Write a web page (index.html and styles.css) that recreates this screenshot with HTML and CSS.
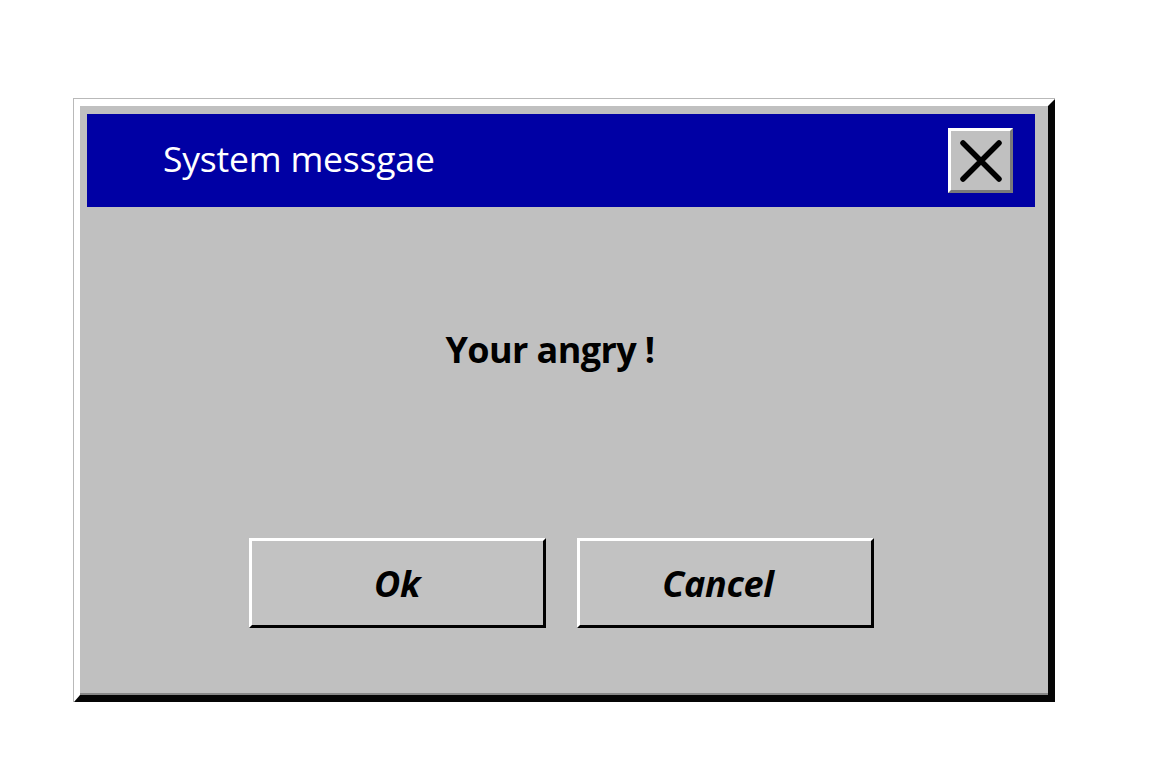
FILE: index.html
```html
<!DOCTYPE html>
<html>
<head>
<meta charset="utf-8">
<link rel="stylesheet" href="styles.css">
</head>
<body>
<div class="dialog">
  <div class="frame">
    <div class="titlebar">
      <span class="title">System messgae</span>
      <button class="close" aria-label="Close">
        <svg width="44" height="44" viewBox="0 0 44 44"><path d="M4 4 L40 40 M40 4 L4 40" stroke="#000" stroke-width="5.5" stroke-linecap="round"/></svg>
      </button>
    </div>
    <div class="content">
      <div class="message">Your angry !</div>
      <div class="buttons">
        <button class="btn">Ok</button>
        <button class="btn btn-cancel">Cancel</button>
      </div>
    </div>
  </div>
</div>
</body>
</html>
```
FILE: styles.css
```css
html, body {
  margin: 0;
  padding: 0;
  background: #ffffff;
}
body {
  padding: 98px 0 0 73px;
  font-family: "Open Sans", "Noto Sans", sans-serif;
}
.dialog {
  width: 982px;
  height: 604px;
  box-sizing: border-box;
  border-top: 1px solid #b9b9b9;
  border-left: 1px solid #b9b9b9;
}
.frame {
  box-sizing: border-box;
  height: 100%;
  background: #c0c0c0;
  border-top: 7px solid #ffffff;
  border-left: 6px solid #ffffff;
  border-right: 7px solid #050505;
  border-bottom: 7px solid #050505;
  box-shadow: inset -2px -7px 0 -5px #888888;
  padding: 8px 13px 7px 7px;
  display: flex;
  flex-direction: column;
}
.titlebar {
  height: 93px;
  flex: none;
  background: #0000a4;
  display: flex;
  align-items: center;
  justify-content: space-between;
  padding: 0 22px 0 76px;
  box-sizing: border-box;
}
.title {
  color: #ffffff;
  font-size: 35.5px;
  font-weight: 400;
  letter-spacing: -0.2px;
  margin-top: -6px;
}
.close {
  width: 65px;
  height: 65px;
  box-sizing: border-box;
  padding: 0;
  margin: 0;
  background: #c0c0c0;
  border-top: 3px solid #ffffff;
  border-left: 3px solid #ffffff;
  border-right: 3px solid #7a7a7a;
  border-bottom: 3px solid #7a7a7a;
  display: flex;
  align-items: center;
  justify-content: center;
}
.close svg {
  display: block;
}
.content {
  flex: 1;
  display: flex;
  flex-direction: column;
  align-items: center;
}
.message {
  margin-top: 118px;
  margin-right: 22px;
  font-size: 36px;
  font-weight: 700;
  color: #000;
  letter-spacing: -0.6px;
}
.buttons {
  margin-top: 164px;
  display: flex;
  gap: 31px;
}
.btn {
  width: 297px;
  height: 90px;
  box-sizing: border-box;
  background: #c2c2c2;
  border-top: 3px solid #ffffff;
  border-left: 3px solid #ffffff;
  border-right: 3px solid #000000;
  border-bottom: 3px solid #000000;
  font-family: "Open Sans", "Noto Sans", sans-serif;
  font-size: 36px;
  font-weight: 700;
  font-style: italic;
  letter-spacing: -0.3px;
  color: #000;
  padding: 0;
  margin: 0;
}
.btn-cancel {
  padding-right: 14px;
}
```
